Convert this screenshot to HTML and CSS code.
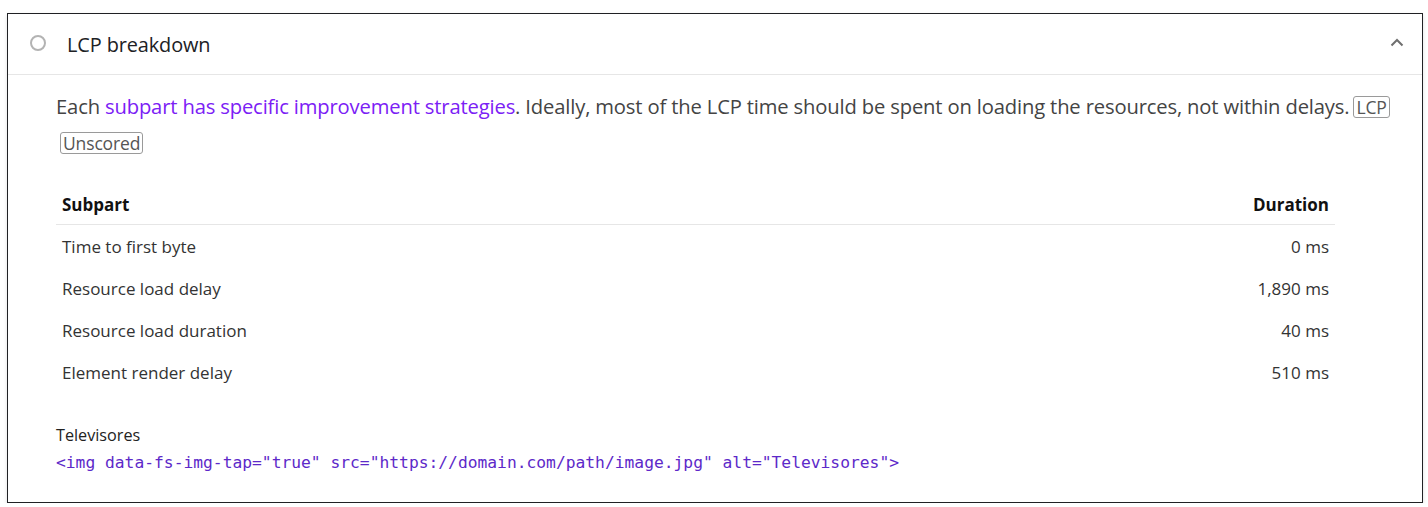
FILE: index.html
```html
<!DOCTYPE html>
<html lang="en">
<head>
<meta charset="utf-8">
<title>LCP breakdown</title>
<link rel="stylesheet" href="styles.css">
</head>
<body>
<div class="audit">
  <div class="audit-header">
    <span class="score-icon"></span>
    <span class="audit-title">LCP breakdown</span>
    <svg class="chevron" width="14" height="9" viewBox="0 0 14 9"><path d="M1.5 7.5 L7 2 L12.5 7.5" fill="none" stroke="#6f6f6f" stroke-width="2"/></svg>
  </div>
  <div class="audit-body">
    <p class="desc">Each <a class="link" href="#">subpart has specific improvement strategies</a>. Ideally, most of the LCP time should be spent on loading the resources, not within delays.<span class="badge">LCP</span> <span class="badge">Unscored</span></p>
    <table class="table">
      <thead>
        <tr><th class="left">Subpart</th><th class="right">Duration</th></tr>
      </thead>
      <tbody>
        <tr><td class="left">Time to first byte</td><td class="right">0 ms</td></tr>
        <tr><td class="left">Resource load delay</td><td class="right">1,890 ms</td></tr>
        <tr><td class="left">Resource load duration</td><td class="right">40 ms</td></tr>
        <tr><td class="left">Element render delay</td><td class="right">510 ms</td></tr>
      </tbody>
    </table>
    <div class="node">
      <div class="node-label">Televisores</div>
      <div class="node-snippet">&lt;img data-fs-img-tap="true" src="https://domain.com/path/image.jpg" alt="Televisores"&gt;</div>
    </div>
  </div>
</div>
</body>
</html>
```
FILE: styles.css
```css
html, body {
  margin: 0;
  padding: 0;
  background: #fff;
}
body {
  padding: 13px 5px 0 7px;
  font-family: "Open Sans", "Noto Sans", sans-serif;
  color: #333;
}
.audit {
  width: 1414px;
  height: 488px;
  border: 1px solid #202124;
  box-shadow: 0 2px 4px rgba(0,0,0,0.12);
  background: #fff;
}
.audit-header {
  height: 60px;
  border-bottom: 1px solid #e6e6e6;
  display: flex;
  align-items: center;
  padding: 0 18px 0 22px;
}
.score-icon {
  width: 12px;
  height: 12px;
  border: 2.5px solid #b3b3b3;
  border-radius: 50%;
  margin-right: 21px;
  margin-top: -2px;
}
.audit-title {
  font-size: 19.9px;
  color: #202124;
  flex: 1;
  letter-spacing: -0.1px;
}
.chevron {
  margin-top: -3px;
}
.audit-body {
  padding: 13px 0 0 48px;
}
.desc {
  margin: 0;
  font-size: 20.2px;
  line-height: 36px;
  color: #444;
  letter-spacing: -0.15px;
  width: 1345px;
}
.link {
  color: #7b20f5;
  text-decoration: none;
}
.badge {
  display: inline-block;
  border: 1px solid #9a9a9a;
  border-radius: 3px;
  font-size: 17.5px;
  line-height: 20px;
  padding: 0 2px;
  margin-left: 4px;
  color: #555;
}
.table {
  border-collapse: collapse;
  width: 1279px;
  margin-top: 24px;
  font-size: 17px;
  color: #333;
}
.table th {
  font-weight: 700;
  color: #111;
  height: 40px;
  padding: 0 6px;
  border-bottom: 1px solid #e6e6e6;
  font-size: 17px;
}
.table td {
  height: 42px;
  padding: 0 6px;
}
.left { text-align: left; }
.right { text-align: right; }
.node {
  margin-top: 30px;
}
.node-label {
  font-size: 16.2px;
  color: #222;
  line-height: 24px;
}
.node-snippet {
  font-family: "DejaVu Sans Mono", "Liberation Mono", monospace;
  font-size: 16.3px;
  color: #5d29c9;
  line-height: 30px;
  margin-top: 1px;
}
```
